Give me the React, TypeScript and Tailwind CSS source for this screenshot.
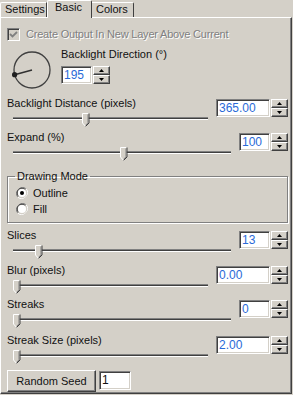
import React from 'react'

const sunken =
  'border border-t-[#808080] border-l-[#808080] border-b-white border-r-white shadow-[inset_1px_1px_0_#404040,inset_-1px_-1px_0_#d4d0c8]'
const raised =
  'border border-t-white border-l-white border-b-[#404040] border-r-[#404040] shadow-[inset_-1px_-1px_0_#808080]'

function Spinner() {
  return (
    <div className="flex flex-col w-[17px] h-[18px] ml-px">
      <div className={`${raised} bg-[#d4d0c8] h-[9px] flex items-center justify-center`}>
        <svg width="5" height="3" viewBox="0 0 5 3">
          <path d="M2.5 0 L5 3 L0 3Z" fill="#000" />
        </svg>
      </div>
      <div className={`${raised} bg-[#d4d0c8] h-[9px] flex items-center justify-center`}>
        <svg width="5" height="3" viewBox="0 0 5 3">
          <path d="M0 0 L5 0 L2.5 3Z" fill="#000" />
        </svg>
      </div>
    </div>
  )
}

function NumBox({ value, wide }: { value: string; wide?: boolean }) {
  return (
    <div className="flex">
      <div
        className={`${sunken} bg-white h-[18px] ${wide ? 'w-[54px]' : 'w-[31px]'} pl-[2px] leading-[16px] text-[12px] text-[#2a6ad8]`}
      >
        {value}
      </div>
      <Spinner />
    </div>
  )
}

function Thumb() {
  return (
    <svg width="8" height="14" viewBox="0 0 8 14">
      <path d="M0.5 0.5 H6.5 V10 L3.5 13.3 L0.5 10Z" fill="#d4d0c8" />
      <path d="M0.5 10 V0.5 H6.5" stroke="#fff" fill="none" />
      <path d="M7 0.5 V10 L3.5 13.5" stroke="#404040" fill="none" />
      <path d="M6 1.5 V9.8 L3.5 12.5" stroke="#808080" fill="none" />
      <path d="M0.5 10 L3.5 13.3" stroke="#fff" fill="none" />
    </svg>
  )
}

function Slider({ frac }: { frac: number }) {
  return (
    <div className="relative h-[14px] mt-[3px] ml-[6px] mr-[8px]">
      <div className="mt-[4px] h-[3px] border-t border-t-[#808080] bg-[#404040] border-b border-b-white" />
      <div className="absolute top-0" style={{ left: `calc(${frac} * (100% - 7px))` }}>
        <Thumb />
      </div>
    </div>
  )
}

function Setting({
  label,
  value,
  frac,
  wide,
  className = '',
}: {
  label: string
  value: string
  frac: number
  wide?: boolean
  className?: string
}) {
  return (
    <div className={`flex h-[34px] ${className}`}>
      <div className="flex-1 flex flex-col">
        <div className="h-[13px] leading-[13px]">{label}</div>
        <Slider frac={frac} />
      </div>
      <div className="mt-[2px]">
        <NumBox value={value} wide={wide} />
      </div>
    </div>
  )
}

function Radio({ checked, label }: { checked?: boolean; label: string }) {
  return (
    <div className="flex items-center h-[16px] ml-[8px]">
      <svg width="12" height="12" viewBox="0 0 12 12">
        <path d="M10.2 1.8 A6 6 0 0 0 1.8 10.2" stroke="#808080" fill="none" />
        <path d="M9.4 2.6 A4.8 4.8 0 0 0 2.6 9.4" stroke="#404040" fill="none" />
        <path d="M1.8 10.2 A6 6 0 0 0 10.2 1.8" stroke="#fff" fill="none" />
        <path d="M2.6 9.4 A4.8 4.8 0 0 0 9.4 2.6" stroke="#d4d0c8" fill="none" />
        <circle cx="6" cy="6" r="4" fill="#fff" />
        {checked && <circle cx="6" cy="6" r="2" fill="#000" />}
      </svg>
      <span className="ml-[5px] leading-[13px]">{label}</span>
    </div>
  )
}

export default function App() {
  return (
    <div className="w-[293px] h-[395px] bg-[#d4d0c8] font-['Liberation_Sans',Arial,sans-serif] text-[11px] text-[#111] overflow-hidden">
      {/* tabs */}
      <div className="flex items-end h-[17px]">
        <div className="h-[15px] w-[47px] border-t border-l border-white border-r border-r-[#404040] rounded-tl-[2px] pl-[4px] leading-[13px]">
          Settings
        </div>
        <div className="relative z-10 h-[18px] -mb-px w-[45px] bg-[#d4d0c8] border-t border-l border-white border-r border-r-[#404040] rounded-t-[2px] pl-[7px] leading-[13px]">
          Basic
        </div>
        <div className="h-[15px] w-[42px] border-t border-white border-r border-r-[#404040] rounded-tr-[2px] pl-[4px] leading-[13px]">
          Colors
        </div>
      </div>

      {/* panel */}
      <div className="w-[292px] h-[377px] border border-t-white border-l-white border-r-[#404040] border-b-[#404040] shadow-[inset_-1px_-1px_0_#808080] pl-[6px] pr-[3px]">
        <div className="flex items-center h-[13px] mt-[10px]">
          <div className={`${sunken} w-[13px] h-[13px] bg-[#d4d0c8] flex items-center justify-center`}>
            <svg width="9" height="9" viewBox="0 0 9 9">
              <path d="M1 4 L3.5 6.5 L8 2" stroke="#808080" strokeWidth="1.8" fill="none" />
            </svg>
          </div>
          <span className="ml-[6px] tracking-[-0.2px] text-[#808080] [text-shadow:1px_1px_0_#fff]">
            Create Output In New Layer Above Current
          </span>
        </div>

        {/* direction dial */}
        <div className="flex h-[49px] mt-[7px]">
          <svg width="50" height="48" viewBox="0 0 50 48">
            <circle cx="25" cy="22" r="18" stroke="#404040" strokeWidth="1.3" fill="none" />
            <line x1="25" y1="22" x2="7.6" y2="26.7" stroke="#303030" strokeWidth="1.6" />
            <circle cx="7.6" cy="26.7" r="2.6" fill="#202020" />
          </svg>
          <div className="ml-[4px] flex flex-col">
            <div className="h-[13px] leading-[13px]">Backlight Direction (°)</div>
            <div className="mt-[5px]">
              <NumBox value="195" />
            </div>
          </div>
        </div>

        <Setting label="Backlight Distance (pixels)" value="365.00" frac={0.365} wide />
        <Setting label="Expand (%)" value="100" frac={0.505} />

        <fieldset className="mt-[5px] border border-[#808080] shadow-[1px_1px_0_#fff,inset_1px_1px_0_#fff] pb-[5px]">
          <legend className="ml-[7px] px-[2px] leading-[13px]">Drawing Mode</legend>
          <div className="mt-[2px]">
            <Radio checked label="Outline" />
            <Radio label="Fill" />
          </div>
        </fieldset>

        <Setting className="mt-[6px]" label="Slices" value="13" frac={0.104} />
        <Setting className="mt-px" label="Blur (pixels)" value="0.00" frac={0} wide />
        <Setting label="Streaks" value="0" frac={0} />
        <Setting className="mt-[2px]" label="Streak Size (pixels)" value="2.00" frac={0} wide />

        <div className="flex items-start mt-[2px]">
          <div className={`${raised} w-[89px] h-[22px] flex items-center justify-center`}>
            Random Seed
          </div>
          <div className={`${sunken} bg-white w-[32px] h-[19px] ml-[3px] mt-px pl-[2px] leading-[17px] text-[12px]`}>
            1
          </div>
        </div>
      </div>
    </div>
  )
}
